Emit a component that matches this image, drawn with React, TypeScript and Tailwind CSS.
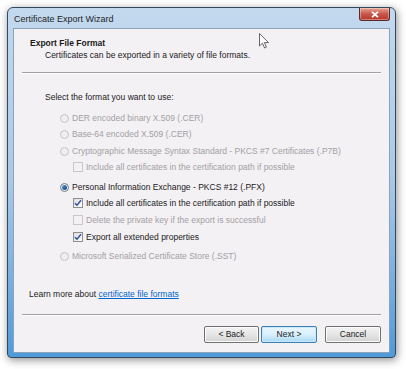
import React from 'react';

type Row = {
  kind: 'radio' | 'check';
  label: string;
  checked?: boolean;
  disabled?: boolean;
  mt: string;
};

const rows: Row[] = [
  { kind: 'radio', label: 'DER encoded binary X.509 (.CER)', disabled: true, mt: 'mt-[8px]' },
  { kind: 'radio', label: 'Base-64 encoded X.509 (.CER)', disabled: true, mt: 'mt-[0px]' },
  { kind: 'radio', label: 'Cryptographic Message Syntax Standard - PKCS #7 Certificates (.P7B)', disabled: true, mt: 'mt-[1px]' },
  { kind: 'check', label: 'Include all certificates in the certification path if possible', disabled: true, mt: 'mt-[0px]' },
  { kind: 'radio', label: 'Personal Information Exchange - PKCS #12 (.PFX)', checked: true, mt: 'mt-[4px]' },
  { kind: 'check', label: 'Include all certificates in the certification path if possible', checked: true, mt: 'mt-[0px]' },
  { kind: 'check', label: 'Delete the private key if the export is successful', disabled: true, mt: 'mt-[1px]' },
  { kind: 'check', label: 'Export all extended properties', checked: true, mt: 'mt-[1px]' },
  { kind: 'radio', label: 'Microsoft Serialized Certificate Store (.SST)', disabled: true, mt: 'mt-[3px]' },
];

function Radio({ checked, disabled }: { checked?: boolean; disabled?: boolean }) {
  return (
    <span
      className={`flex h-[9px] w-[9px] shrink-0 items-center justify-center rounded-full border ${
        disabled ? 'border-[#c4c4c4] bg-[#f0eef0]' : 'border-[#6b7b8c] bg-gradient-to-br from-[#e6e6e6] to-[#ffffff]'
      }`}
    >
      {checked && (
        <span className="h-[5px] w-[5px] rounded-full bg-gradient-to-br from-[#5a9bd8] to-[#0d3f7a]" />
      )}
    </span>
  );
}

function Check({ checked, disabled }: { checked?: boolean; disabled?: boolean }) {
  return (
    <span
      className={`flex h-[10px] w-[10px] shrink-0 items-center justify-center border ${
        disabled ? 'border-[#c8c8c8] bg-[#f3f1f3]' : 'border-[#8e8f8f] bg-gradient-to-br from-[#dcdcdc] to-[#ffffff]'
      }`}
    >
      {checked && (
        <svg width="8" height="8" viewBox="0 0 8 8">
          <path d="M1 4.2 L3 6.3 L7 1.2" fill="none" stroke="#2b4f9a" strokeWidth="1.4" />
        </svg>
      )}
    </span>
  );
}

function Btn({ label, primary }: { label: string; primary?: boolean }) {
  return (
    <div
      className={`flex h-[17px] items-center justify-center rounded-[2px] border text-[8.5px] text-[#1a1a1a] ${
        primary
          ? 'border-[#3c7fb1] bg-gradient-to-b from-[#eaf6fd] via-[#d9f0fc] to-[#a7d9f5] shadow-[inset_0_0_0_1px_#c9e8fa]'
          : 'border-[#707070] bg-gradient-to-b from-[#f3f3f3] via-[#e6e6e6] to-[#d2d2d2] shadow-[inset_0_0_0_1px_#fcfcfc]'
      }`}
    >
      {label}
    </div>
  );
}

export default function App() {
  return (
    <div
      className="relative h-[369px] w-[406px] overflow-hidden bg-white"
      style={{ fontFamily: '"Liberation Sans", Arial, sans-serif' }}
    >
      {/* Window */}
      <div className="ml-[7px] mt-[7px] flex h-[351px] w-[389px] flex-col rounded-t-[6px] rounded-b-[4px] border border-[#34485c] bg-gradient-to-b from-[#c3d9ee] via-[#a9c8e6] to-[#4f9ad9] px-[5px] pb-[4px] shadow-[1px_2px_8px_rgba(0,0,0,0.45)]">
        {/* Title bar */}
        <div className="flex h-[20px] items-start justify-between">
          <span className="pl-[1px] pt-[5px] text-[9px] leading-[12px] text-[#1e1e1e]">Certificate Export Wizard</span>
          <div className="flex h-[13px] w-[31px] items-center justify-center rounded-b-[3px] border border-t-0 border-[#5a2a2a] bg-gradient-to-b from-[#e6a597] via-[#c7564a] to-[#b8362a] shadow-[inset_0_0_0_1px_rgba(255,255,255,0.35)]">
            <svg width="8" height="7" viewBox="0 0 8 7">
              <path d="M1 0.8 L7 6.2 M7 0.8 L1 6.2" stroke="#ffffff" strokeWidth="1.8" />
            </svg>
          </div>
        </div>

        {/* Client */}
        <div className="flex flex-1 flex-col border border-[#8aa3bd] bg-[#f4f1f5] text-[8.5px] text-[#1a1a1a]">
          <div className="pl-[16px] pt-[9px]">
            <div className="font-bold leading-[10px]">Export File Format</div>
            <div className="mt-[2px] pl-[15px] leading-[10px]">Certificates can be exported in a variety of file formats.</div>
          </div>
          <div className="mx-[8px] mt-[12px] h-[2px] border-t border-b border-t-[#a0a0a0] border-b-white" />

          <div className="pl-[31px] pt-[18px] leading-[10px]">Select the format you want to use:</div>

          <div className="flex flex-col pl-[46px]">
            {rows.map((r, i) => (
              <div
                key={i}
                className={`flex h-[16px] items-center gap-[3px] ${r.mt} ${r.kind === 'check' ? 'pl-[13px]' : ''} ${
                  r.disabled ? 'text-[#a2a0a2]' : 'text-[#1a1a1a]'
                }`}
              >
                {r.kind === 'radio' ? (
                  <Radio checked={r.checked} disabled={r.disabled} />
                ) : (
                  <Check checked={r.checked} disabled={r.disabled} />
                )}
                <span className="whitespace-nowrap">{r.label}</span>
              </div>
            ))}
          </div>

          <div className="mt-[25px] pl-[15px] leading-[10px]">
            Learn more about <span className="text-[#0066cc] underline">certificate file formats</span>
          </div>

          <div className="mx-[8px] mt-[15px] h-[2px] border-t border-b border-t-[#a0a0a0] border-b-white" />

          <div className="mt-[10px] flex pr-[6px] pl-[190px]">
            <div className="w-[55px]">
              <Btn label="< Back" />
            </div>
            <div className="ml-[2px] w-[56px]">
              <Btn label="Next >" primary />
            </div>
            <div className="ml-[8px] w-[56px]">
              <Btn label="Cancel" />
            </div>
          </div>
        </div>
      </div>

      {/* Mouse pointer */}
      <svg className="absolute left-[259px] top-[33px]" width="12" height="17" viewBox="0 0 12 17">
        <path d="M0.5 0.5 L0.5 13 L3.5 10.2 L5.6 15 L7.4 14.2 L5.4 9.6 L9.5 9.6 Z" fill="#ffffff" stroke="#555" strokeWidth="0.9" strokeLinejoin="round" />
      </svg>
    </div>
  );
}
